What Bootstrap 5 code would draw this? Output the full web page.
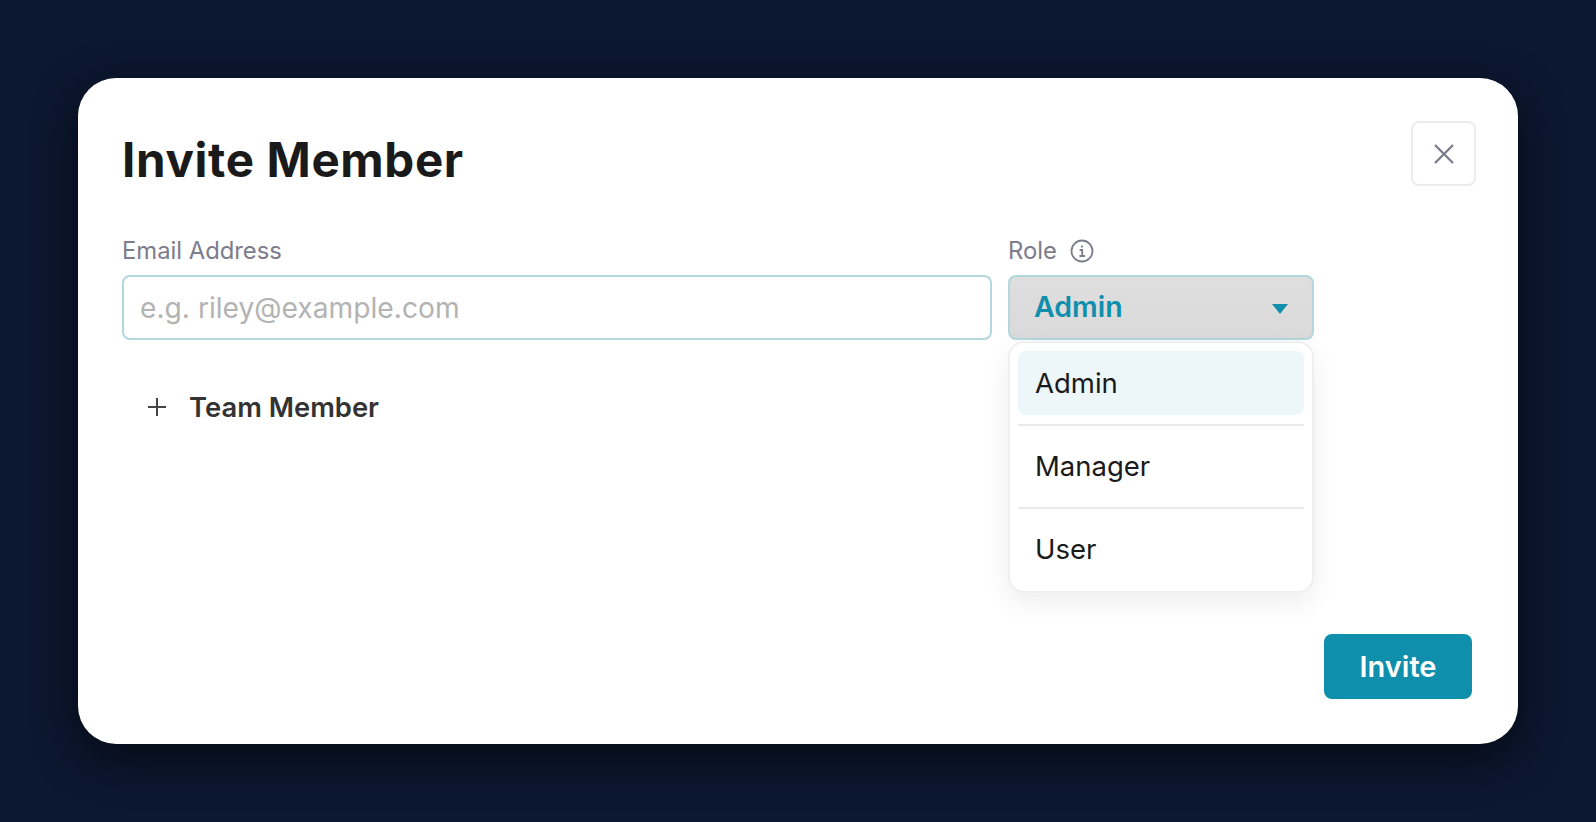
<!DOCTYPE html>
<html lang="en">
<head>
<meta charset="utf-8">
<title>Invite Member</title>
<link href="https://cdn.jsdelivr.net/npm/bootstrap@5.3.0/dist/css/bootstrap.min.css" rel="stylesheet">
<style>
html,body{height:100%}
body{background:#0c1831;font-family:Inter,"Liberation Sans",sans-serif;padding:78px;overflow:hidden}
.sheet{width:1440px;height:666px;background:#fff;border-radius:38px;box-shadow:0 14px 44px rgba(5,8,12,.8);padding:43px 42px 45px 44px}
.sheet-title{font-size:47.5px;font-weight:700;color:#1a1a1a;line-height:78px;margin:0;letter-spacing:.65px}
.close-box{width:65px;height:65px;border:2px solid #ececee;border-radius:8px;background:#fff;padding:0}
.head-row{height:64px;margin-bottom:52px}
.field-label{font-size:23.8px;color:#7c7c8c;line-height:28px;margin-bottom:10px}
.email-col{width:870px}
.role-col{width:306px;margin-left:16px}
.email-input.form-control{height:65px;border:2px solid #b4d6df;border-radius:8px;font-size:28.2px;padding:0 16px;color:#333}
.email-input.form-control::placeholder{color:#b3b3b3}
.role-toggle{height:65px;border:2px solid #b4d6df;border-radius:8px;background:linear-gradient(#dedede,#dadada);color:#0f8fac;font-size:28.5px;font-weight:600;padding:0 24px}
.role-toggle:hover,.role-toggle:active{color:#0f8fac!important;border-color:#b4d6df!important}
.caret-mark{width:0;height:0;border-left:8px solid transparent;border-right:8px solid transparent;border-top:10px solid #0f8fac;margin-top:3px}
.role-menu.dropdown-menu{position:absolute;top:66px;left:0;width:306px;height:252px;border:2px solid #efeff0;border-radius:16px;box-shadow:0 10px 28px rgba(0,0,0,.07);padding:8px;margin:0}
.role-menu .dropdown-item{height:64px;border-radius:8px;font-size:27.5px;color:#1a1a1a;padding:1px 17px 0;display:flex;align-items:center}
.role-menu .dropdown-item.active{background:#edf7fa;color:#1a1a1a}
.role-menu .dropdown-divider{border-color:#e9e9e9;border-top-width:2px;margin:9px 0 8px;opacity:1}
.add-member{font-size:27.4px;font-weight:600;color:#333;line-height:36px;padding:0;margin:49px 0 0 25px;gap:22px;background:none;border:0}
.invite-btn.btn{width:148px;height:65px;background:#0f8fac;border:0;border-radius:8px;color:#fff;font-size:29px;font-weight:600;padding:0}
.foot-row{margin-top:auto;padding-right:4px}
.info-mark{margin-left:13px}
</style>
</head>
<body>
<div class="sheet d-flex flex-column">
  <div class="head-row d-flex justify-content-between align-items-start">
    <h1 class="sheet-title">Invite Member</h1>
    <button class="close-box d-flex align-items-center justify-content-center" type="button" aria-label="Close">
      <svg width="22" height="22" viewBox="0 0 22 22" fill="none" stroke="#7d7d8c" stroke-width="2.4"><path d="M2 2 20 20M20 2 2 20"/></svg>
    </button>
  </div>
  <div class="d-flex align-items-start">
    <div class="email-col">
      <div class="field-label">Email Address</div>
      <input class="form-control email-input" type="text" placeholder="e.g. riley@example.com">
      <button class="add-member d-flex align-items-center" type="button">
        <svg width="20" height="20" viewBox="0 0 20 20" fill="none" stroke="#444" stroke-width="2"><path d="M10 1V19M1 10H19"/></svg>
        Team Member
      </button>
    </div>
    <div class="role-col">
      <div class="field-label d-flex align-items-center">Role
        <svg class="info-mark" width="24" height="24" viewBox="0 0 24 24" fill="none" stroke="#7c7c8c"><circle cx="12" cy="12" r="10.5" stroke-width="1.8"/><path d="M12 6.6V8.6M9.6 11H12.2V17M9.4 17H15" stroke-width="1.8"/></svg>
      </div>
      <div class="position-relative">
        <button class="btn role-toggle w-100 d-flex align-items-center justify-content-between" type="button">Admin<span class="caret-mark"></span></button>
        <div class="dropdown-menu show role-menu">
          <a class="dropdown-item active" href="#">Admin</a>
          <hr class="dropdown-divider">
          <a class="dropdown-item" href="#">Manager</a>
          <hr class="dropdown-divider">
          <a class="dropdown-item" href="#">User</a>
        </div>
      </div>
    </div>
  </div>
  <div class="foot-row d-flex justify-content-end">
    <button class="btn invite-btn" type="button">Invite</button>
  </div>
</div>
<script src="https://cdn.jsdelivr.net/npm/bootstrap@5.3.0/dist/js/bootstrap.bundle.min.js"></script>
</body>
</html>
